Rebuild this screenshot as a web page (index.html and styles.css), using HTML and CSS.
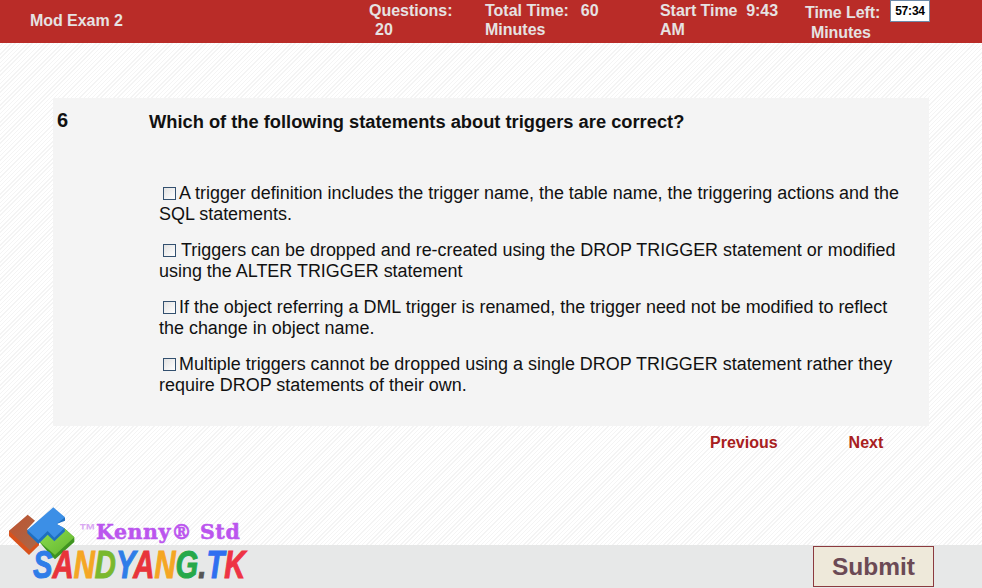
FILE: index.html
```html
<!DOCTYPE html>
<html>
<head>
    <title>Mod Exam 2</title>
    <link rel="stylesheet" href="styles.css">
</head>
<body>
    <header class="top-bar">
        <div class="exam-name">Mod Exam 2</div>
        <div class="info info-questions">Questions:<br><span class="indent">20</span></div>
        <div class="info info-total">Total Time:&nbsp; <span class="info-num">60</span><br>Minutes</div>
        <div class="info info-start">Start Time&nbsp; 9:43<br>AM</div>
        <div class="info info-left">Time Left:<br><span class="indent">Minutes</span></div>
        <div class="timer">57:34</div>
    </header>

    <main class="content">
        <section class="question-card">
            <div class="question-number">6</div>
            <div class="question-body">
                <h2 class="question-text">Which of the following statements about triggers are correct?</h2>
                <div class="option"><span class="check"></span>A trigger definition includes the trigger name, the table name, the triggering actions and the SQL statements.</div>
                <div class="option"><span class="check check-wide"></span>Triggers can be dropped and re-created using the DROP TRIGGER statement or modified using the ALTER TRIGGER statement</div>
                <div class="option"><span class="check"></span>If the object referring a DML trigger is renamed, the trigger need not be modified to reflect the change in object name.</div>
                <div class="option"><span class="check"></span>Multiple triggers cannot be dropped using a single DROP TRIGGER statement rather they require DROP statements of their own.</div>
            </div>
        </section>
        <nav class="pager">
            <a class="pager-link">Previous</a>
            <a class="pager-link">Next</a>
        </nav>
    </main>

    <footer class="bottom-bar">
        <button class="submit-btn">Submit</button>
    </footer>

    <div class="logo">
        <svg class="logo-icon" width="75" height="65" viewBox="0 0 225 195">
            <defs>
                <linearGradient id="orange" x1="0" y1="0" x2="1" y2="1">
                    <stop offset="0" stop-color="#c0532f"/>
                    <stop offset="1" stop-color="#a8694a"/>
                </linearGradient>
                <linearGradient id="green" x1="0" y1="0" x2="1" y2="1">
                    <stop offset="0" stop-color="#8ede4e"/>
                    <stop offset="1" stop-color="#62b52f"/>
                </linearGradient>
            </defs>
            <path d="M12 92 L12 108 L72 165 L102 136 L102 118 Z" fill="#d8521c"/>
            <path d="M12 92 L68 44 L90 62 L66 88 L102 122 L74 150 Z" fill="url(#orange)"/>
            <path d="M100 122 L130 92 L150 112 L178 85 L208 112 L208 126 L150 178 L134 162 Z" fill="#3f9420"/>
            <path d="M100 122 L130 92 L150 112 L178 85 L208 112 L150 165 Z" fill="url(#green)"/>
            <path d="M67 90 L67 100 L100 132 L128 104 L148 124 L180 94 L178 85 L155 72 L180 62 L180 52 Z" fill="#1f6fc0"/>
            <path d="M67 90 L145 22 L180 52 L155 72 L178 85 L148 113 L128 93 L100 120 Z" fill="#3c8fe6"/>
        </svg>
        <div class="logo-line"><span class="logo-tm">™</span><span class="logo-kenny">Kenny® Std</span></div>
        <div class="logo-site"><span class="c1">S</span><span class="c2">A</span><span class="c3">N</span><span class="c4">D</span><span class="c5">Y</span><span class="c6">A</span><span class="c7">N</span><span class="c8">G</span><span class="c9">.</span><span class="c10">T</span><span class="c11">K</span></div>
    </div>
</body>
</html>
```

FILE: styles.css
```css
html, body { height: 100%; }
body { margin: 0; font-family: "Liberation Sans", Arial, sans-serif; color: #111; display: flex; flex-direction: column; min-height: 588px; background: repeating-linear-gradient(135deg, #fff 0, #fff 2px, #f4f4f4 2px, #f4f4f4 3px); }

.top-bar { height: 43px; background: #b92c28; color: #e6e2e2; font-size: 16px; font-weight: bold; line-height: 19px; display: grid; grid-template-columns: 369px 116px 175px 145px 85px 40px; flex-shrink: 0; }
.exam-name { padding: 11px 0 0 30px; letter-spacing: -0.05px; }
.info { padding-top: 1px; }
.info-num { margin-left: 3px; }
.info-start { letter-spacing: -0.05px; }
.info-left { padding-top: 3px; line-height: 20px; letter-spacing: -0.1px; }
.indent { margin-left: 6px; }
.timer { height: 22px; background: #fff; border: 1px solid #6d8aa8; color: #000; font-size: 12px; font-weight: bold; line-height: 18px; letter-spacing: -0.2px; text-align: center; box-sizing: border-box; padding-top: 1px; }

.content { flex: 1; padding: 55px 53px 0; }
.question-card { background: #f4f4f4; height: 328px; display: grid; grid-template-columns: 96px 1fr; }
.question-number { font-size: 20px; font-weight: bold; padding: 11px 0 0 4px; }
.question-body { padding: 13px 30px 0 10px; }
.question-text { margin: 0 0 51px -10px; font-size: 18.3px; line-height: 21px; }
.option { font-size: 17.95px; line-height: 21px; margin-bottom: 15px; }
.check { display: inline-block; width: 11px; height: 11px; margin: 0 3px 0 4px; border: 1px solid #33506f; background: linear-gradient(135deg, #e2e2e2, #fff); vertical-align: -1px; }
.check-wide { margin-right: 5px; }

.pager { display: flex; padding: 7px 0 0 657px; gap: 71px; }
.pager-link { font-size: 16px; font-weight: bold; color: #a82020; line-height: 19px; }

.bottom-bar { height: 43px; background: #e7e8e8; display: flex; justify-content: flex-end; padding-right: 48px; flex-shrink: 0; }
.submit-btn { width: 121px; height: 41px; margin-top: 1px; background: #eee9da; border: 1px solid #8c3a3f; color: #6b4a55; font-family: inherit; font-size: 24.5px; font-weight: bold; padding: 0; }

/* logo sits over the page corner */
.logo { position: absolute; left: 5px; top: 500px; width: 245px; height: 84px; }
.logo-icon { position: absolute; left: 0; top: 0; }
.logo-line { position: absolute; left: 74px; top: 18px; line-height: 26px; white-space: nowrap; }
.logo-tm { font-size: 17px; font-weight: bold; color: #d9a8f2; vertical-align: 3px; }
.logo-kenny { font-family: "DejaVu Serif", serif; font-size: 20.5px; font-weight: bold; color: #bb55ee; letter-spacing: 0.6px; -webkit-text-stroke: 0.5px #bb55ee; }
.logo-site { position: absolute; left: 28px; top: 46px; font-size: 38px; line-height: 38px; font-weight: bold; font-style: italic; white-space: nowrap; transform: scaleX(0.77); transform-origin: left top; -webkit-text-stroke: 1px currentColor; }
.c1 { color: #2f7de8; } .c2 { color: #e8343a; } .c3 { color: #f5a623; } .c4 { color: #7ab82e; }
.c5 { color: #2f7de8; } .c6 { color: #e8343a; } .c7 { color: #f5a623; } .c8 { color: #27a84a; }
.c9 { color: #555; } .c10 { color: #2f6ff0; } .c11 { color: #ee3344; }
```
